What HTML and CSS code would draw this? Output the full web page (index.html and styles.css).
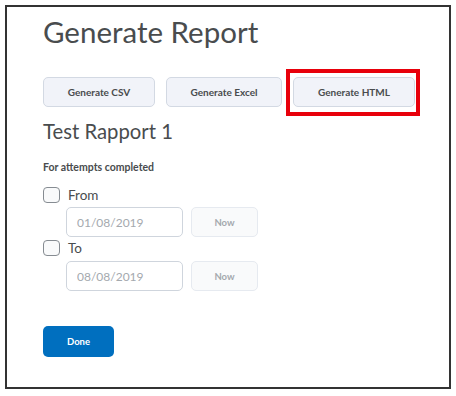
FILE: index.html
```html
<!DOCTYPE html>
<html lang="en">
<head>
  <meta charset="UTF-8">
  <title>Generate Report</title>
  <link rel="stylesheet" href="styles.css">
</head>
<body>
  <div class="frame">
    <h1 class="title">Generate Report</h1>

    <div class="actions">
      <button class="btn btn-csv">Generate CSV</button>
      <button class="btn btn-excel">Generate Excel</button>
      <button class="btn btn-html marked">Generate HTML</button>
    </div>

    <h2 class="subtitle">Test Rapport 1</h2>

    <div class="label">For attempts completed</div>

    <label class="check">
      <span class="box"></span>
      <span class="check-text">From</span>
    </label>
    <div class="date-row">
      <input class="date" type="text" placeholder="01/08/2019">
      <button class="now">Now</button>
    </div>

    <label class="check check-to">
      <span class="box"></span>
      <span class="check-text">To</span>
    </label>
    <div class="date-row date-row-to">
      <input class="date" type="text" placeholder="08/08/2019">
      <button class="now">Now</button>
    </div>

    <button class="done">Done</button>
  </div>
</body>
</html>
```

FILE: styles.css
```css
body {
  margin: 0;
  background: #fff;
  font-family: Lato, "Open Sans", sans-serif;
  color: #494c4e;
}
.frame {
  margin: 5px 0 0 5px;
  width: 406px;
  height: 372px;
  border: 2px solid #333;
  padding: 8px 0 0 36px;
}
.title {
  margin: 0;
  font-size: 29.5px;
  line-height: 34px;
  font-weight: 400;
  color: #494c4e;
}
.actions {
  display: flex;
  gap: 11px;
  margin-top: 28px;
}
.btn {
  height: 30px;
  padding: 0;
  font-family: inherit;
  font-size: 10px;
  font-weight: 700;
  color: #494c4e;
  background: #f1f3f9;
  border: 1px solid #d3d9e3;
  border-radius: 5px;
}
.btn-csv {
  width: 112px;
}
.btn-excel {
  width: 116px;
}
.btn-html {
  width: 122px;
}
.marked {
  position: relative;
}
.marked::after {
  content: "";
  position: absolute;
  left: -8px;
  right: -6px;
  top: -9px;
  bottom: -10px;
  border: 4px solid #e8000b;
}
.subtitle {
  margin: 12px 0 0;
  font-size: 20.3px;
  line-height: 25px;
  font-weight: 400;
  color: #494c4e;
}
.label {
  margin-top: 16px;
  font-size: 10.5px;
  line-height: 14px;
  font-weight: 700;
}
.check {
  display: flex;
  align-items: center;
  gap: 8px;
  margin-top: 12px;
  height: 17px;
}
.check-to {
  margin-top: 2px;
}
.box {
  width: 17px;
  height: 16px;
  box-sizing: border-box;
  border: 1.5px solid #868c92;
  border-radius: 4px;
  background: #f9fafb;
}
.check-text {
  font-size: 13.5px;
}
.date-row {
  display: flex;
  gap: 8px;
  margin: 4px 0 0 23px;
}
.date-row-to {
  margin-top: 5px;
}
.date {
  width: 117px;
  height: 30px;
  box-sizing: border-box;
  padding: 0 10px;
  font-family: inherit;
  font-size: 12px;
  border: 1px solid #cfd5dd;
  border-radius: 5px;
}
.date::placeholder {
  color: #a4a9ae;
}
.now {
  width: 67px;
  height: 30px;
  font-family: inherit;
  font-size: 9.5px;
  font-weight: 700;
  color: #a4a9ae;
  background: #f9fafb;
  border: 1px solid #e6eaf0;
  border-radius: 5px;
}
.done {
  display: block;
  margin-top: 35px;
  width: 71px;
  height: 31px;
  font-family: inherit;
  font-size: 9.5px;
  font-weight: 700;
  color: #fff;
  background: #006fbf;
  border: none;
  border-radius: 5px;
}
```
